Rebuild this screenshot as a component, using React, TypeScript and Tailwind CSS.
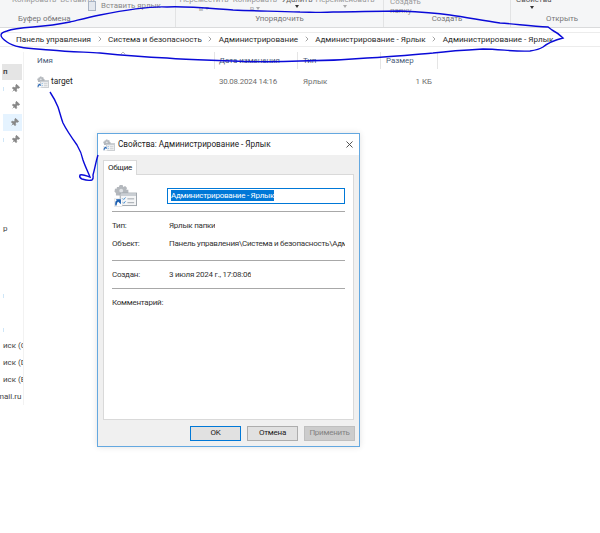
import { Pin, X, ChevronUp, ChevronRight } from "lucide-react";

const font = "font-['Roboto','Liberation_Sans',sans-serif]";

function ShortcutIcon({ size }: { size: number }) {
	return (
		<svg width={size} height={size} viewBox="0 0 24 24" className="shrink-0">
			{/* gear */}
			<path
				d="M6 1h3l.6 2 2-.8 2 2-.8 1.8H15v6H2V9.5L.5 8l.5-3 2-.2L3 3l2 .2z"
				fill="#b4b8bd"
			/>
			<circle cx="7.5" cy="7" r="2" fill="#dfe2e5" />
			{/* window */}
			<rect x="6.5" y="9.5" width="17" height="13" fill="#f4f5f6" stroke="#9ea4aa" />
			<rect x="7" y="10" width="16" height="2.5" fill="#c9ced3" />
			<path d="M9 15l1.2 1.2L12 14M9 19l1.2 1.2L12 18" stroke="#4a90d0" strokeWidth="1" fill="none" />
			<path d="M14 15.5h7M14 19.5h7" stroke="#9ea4aa" />
			{/* shortcut arrow */}
			<rect x="0.5" y="15.5" width="8" height="8" fill="#fff" stroke="#d0d0d0" strokeWidth="0.5" />
			<path d="M2 22.5v-2.5c0-1.5 1-2.5 2.5-2.5M3.5 16.5h3v3z" stroke="#1c5fb0" strokeWidth="1.4" fill="#1c5fb0" />
		</svg>
	);
}

function Caret({ dark }: { dark?: boolean }) {
	return (
		<span
			className={`inline-block w-0 h-0 border-x-[2.5px] border-x-transparent border-t-[3px] ${dark ? "border-t-[#333]" : "border-t-[#aaa]"}`}
		/>
	);
}

function RibbonButton({ label, width, second, dark }: { label: string; width: string; second?: string; dark?: boolean }) {
	return (
		<div className={`${width} flex flex-col items-center leading-[9px] whitespace-nowrap ${dark ? "text-[#666]" : "text-[#999]"}`}>
			<span>{label}</span>
			<span className="flex items-center gap-[2px] h-[9px]">
				{second && <span className="text-[#aaa]">{second}</span>}
				<Caret dark={dark} />
			</span>
		</div>
	);
}

function Ribbon() {
	return (
		<div className="flex h-[28px] bg-[#f5f6f7] border-b border-[#dadbdc] text-[7.9px] text-[#777] overflow-hidden">
			<div className="w-[176px] flex flex-col justify-between border-r border-[#e2e3e4] pb-[1px]">
				<div className="flex h-[12px]">
					<span className="w-[88px] pl-[12px] -mt-[6px] whitespace-nowrap text-[#999]">Копировать&nbsp;&nbsp;Вставить</span>
					<div className="flex items-center gap-[5px]">
						<div className="w-[8px] h-[10px] bg-[#e4e8ee] border border-[#a9b4c4]" />
						<span className="whitespace-nowrap text-[#888]">Вставить ярлык</span>
					</div>
				</div>
				<span className="pl-[18px] leading-[14px]">Буфер обмена</span>
			</div>
			<div className="w-[208px] flex flex-col justify-between border-r border-[#e2e3e4] pb-[1px]">
				<div className="flex h-[13px] -mt-[5px] pl-[3px]">
					<RibbonButton label="Переместить" second="в" width="w-[50px]" />
					<RibbonButton label="Копировать" second="в" width="w-[52px]" />
					<RibbonButton label="Удалить" width="w-[32px]" dark />
					<RibbonButton label="Переименовать" width="w-[64px]" />
				</div>
				<span className="text-center leading-[14px]">Упорядочить</span>
			</div>
			<div className="w-[127px] flex flex-col justify-between border-r border-[#e2e3e4] pb-[1px]">
				<div className="h-[13px] -mt-[3px] pl-[6px] leading-[9px] text-[#999]">
					Создать
					<br />
					папку
				</div>
				<span className="text-center leading-[14px]">Создать</span>
			</div>
			<div className="flex-1 flex flex-col justify-between pb-[1px]">
				<div className="h-[13px] -mt-[5px] pl-[5px] leading-[9px] text-[#555]">
					Свойства
					<div className="pl-[14px] leading-[5px]">
						<Caret dark />
					</div>
				</div>
				<span className="pl-[35px] leading-[14px]">Открыть</span>
			</div>
		</div>
	);
}

function Breadcrumb() {
	const parts = [
		"Панель управления",
		"Система и безопасность",
		"Администрирование",
		"Администрирование - Ярлык",
		"Администрирование - Ярлык",
	];
	return (
		<div className="h-[15px] mt-[4px] pl-[16px] border-y border-[#ececec] flex items-center text-[8.1px] text-[#2a2a2a] whitespace-nowrap">
			{parts.map((p, i) => (
				<span key={i} className="flex items-center">
					{i > 0 && <ChevronRight size={8} className="mx-[4.5px] text-[#777]" />}
					{p}
				</span>
			))}
		</div>
	);
}

function Sidebar() {
	const pinRow = "h-[17px] flex items-center justify-between pl-[3px] pr-[3px]";
	return (
		<div className="w-[24px] shrink-0 border-r border-[#f2f2f2] pt-[12px] text-[8px] text-[#444] overflow-hidden whitespace-nowrap">
			<div className="h-[16px] w-[20px] ml-[2px] bg-[#e5e5e5] flex items-center pl-[1px] font-semibold">п</div>
			<div className={pinRow}>
				<span className="w-[1px] h-[4px] bg-[#cfe6f7]" />
				<Pin size={9} className="text-[#888] rotate-45" fill="#888" />
			</div>
			<div className={pinRow}>
				<span />
				<Pin size={9} className="text-[#888] rotate-45" fill="#888" />
			</div>
			<div className={`${pinRow} bg-[#e5f3ff] ml-[3px] w-[19px]`}>
				<span />
				<Pin size={9} className="text-[#888] rotate-45" fill="#888" />
			</div>
			<div className={pinRow}>
				<span className="w-[1px] h-[4px] bg-[#cfe6f7]" />
				<Pin size={9} className="text-[#888] rotate-45" fill="#888" />
			</div>
			<div className="h-[72px]" />
			<div className="h-[17px] pl-[3px] flex items-center">р</div>
			<div className="h-[54px]" />
			<div className="h-[9px] flex items-center pl-[3px]">
				<span className="w-[1px] h-[4px] bg-[#cfe6f7]" />
			</div>
			<div className="h-[25px]" />
			<div className="h-[9px] flex items-center pl-[3px]">
				<span className="w-[1px] h-[4px] bg-[#cfe6f7]" />
			</div>
			<div className="h-[3px]" />
			{["иск (C", "иск (D", "иск (E"].map((t) => (
				<div key={t} className="h-[17px] flex items-center pl-[3px] overflow-hidden">
					{t}
				</div>
			))}
			<div className="h-[17px] flex items-center -ml-[3px]">mail.ru</div>
		</div>
	);
}

function FileList() {
	const cols = "grid grid-cols-[191px_83px_83px_57px]";
	return (
		<div className="flex-1 text-[7.9px]">
			<div className={`${cols} h-[17px] text-[#4c607a] relative`}>
				<span className="pl-[13px] border-r border-[#e5e5e5] flex items-center">Имя</span>
				<span className="pl-[4px] border-r border-[#e5e5e5] flex items-center">Дата изменения</span>
				<span className="pl-[5px] border-r border-[#e5e5e5] flex items-center">Тип</span>
				<span className="pl-[5px] border-r border-[#e5e5e5] flex items-center">Размер</span>
				<ChevronUp size={8} className="absolute left-[95px] -top-[3px] text-[#999]" />
			</div>
			<div className={`${cols} h-[17px] mt-[4px] items-center text-[#6d6d6d]`}>
				<span className="pl-[13px] flex items-center gap-[2px] text-[#222] text-[8.3px]">
					<ShortcutIcon size={12} />
					target
				</span>
				<span className="pl-[4px] tracking-[-0.2px]">30.08.2024 14:16</span>
				<span className="pl-[5px]">Ярлык</span>
				<span className="text-right pr-[6px]">1 КБ</span>
			</div>
		</div>
	);
}

function Row({ label, children }: { label: string; children: React.ReactNode }) {
	return (
		<div className="flex items-center h-[12px]">
			<span className="w-[57px] shrink-0">{label}</span>
			<span className="overflow-hidden whitespace-nowrap">{children}</span>
		</div>
	);
}

function Dialog() {
	return (
		<div className="absolute left-[97px] top-[133px] w-[263px] h-[314px] border border-[#64a8e0] bg-[#f0f0f0] flex flex-col text-[8px] tracking-[-0.25px] text-[#333] shadow-[0_0_6px_rgba(0,0,0,0.12)]">
			<div className="h-[21px] bg-white flex items-center pl-[5px] pr-[3px] text-[8.2px] tracking-normal text-[#222] shrink-0">
				<ShortcutIcon size={12} />
				<span className="ml-[3px] flex-1">Свойства: Администрирование - Ярлык</span>
				<X size={11} className="text-[#444] mr-[1px]" />
			</div>
			<div className="pl-[5px] pr-[5px] flex flex-col flex-1">
				<div className="mt-[5px] w-[34px] h-[15px] bg-white border border-b-0 border-[#d9d9d9] flex items-center justify-center z-10 -mb-[1px] text-[#222]">
					Общие
				</div>
				<div className="flex-1 bg-white border border-[#d9d9d9] px-[8px] flex flex-col">
					<div className="flex items-center h-[36px] pt-[5px] shrink-0 pl-[2px]">
						<ShortcutIcon size={23} />
						<div className="ml-[30px] w-[178px] h-[16px] border border-[#0078d7] flex items-center pl-[3px]">
							<span className="bg-[#0078d7] text-white leading-[11px] whitespace-nowrap">Администрирование - Ярлык</span>
						</div>
					</div>
					<div className="h-[1px] bg-[#a8a8a8] shrink-0" />
					<div className="flex flex-col gap-[6px] pt-[8px] pb-[10px]">
						<Row label="Тип:">Ярлык папки</Row>
						<Row label="Объект:">Панель управления\Система и безопасность\Адм</Row>
					</div>
					<div className="h-[1px] bg-[#a8a8a8] shrink-0" />
					<div className="pt-[8px] pb-[7px]">
						<Row label="Создан:">3 июля 2024 г., 17:08:06</Row>
					</div>
					<div className="h-[1px] bg-[#a8a8a8] shrink-0" />
					<div className="pt-[8px]">
						<Row label="Комментарий:">{""}</Row>
					</div>
				</div>
				<div className="h-[26px] flex items-center justify-end gap-[6px] shrink-0 -mr-[1px]">
					<button className="w-[51px] h-[15px] bg-[#e1e1e1] border border-[#0078d7] text-[#222]">OK</button>
					<button className="w-[51px] h-[15px] bg-[#e1e1e1] border border-[#adadad] text-[#222]">Отмена</button>
					<button className="w-[51px] h-[15px] bg-[#cccccc] border border-[#bfbfbf] text-[#838383]">Применить</button>
				</div>
			</div>
		</div>
	);
}

export default function App() {
	return (
		<div className={`relative w-[600px] h-[533px] bg-white overflow-hidden ${font}`}>
			<Ribbon />
			<Breadcrumb />
			<div className="flex mt-[5px]">
				<Sidebar />
				<FileList />
			</div>
			<Dialog />
			{/* hand-drawn markup */}
			<svg className="absolute inset-0 pointer-events-none" width="600" height="533" viewBox="0 0 600 533" fill="none">
				<path
					d="M300 12C270 11 255 11 233 10C205 8 185 6 167 7C150 6 125 10 100 15C85 18 75 21 70 22C55 25 45 26 33 27C20 28 12 29 7 31C3 32 1 33 1 35C1 38 4 40 7 42C11 45 15 46 20 47C30 49 40 49 50 50C70 52 85 52 100 53C120 55 145 57 167 58C190 60 210 60 233 61C255 62 280 62 300 61C320 61 345 60 367 58C390 57 410 55 433 53C450 51 465 50 483 49C500 49 515 52 530 51C537 50 540 49 543 47C548 43 555 40 563 38C560 35 556 32 552 30L548 27C530 26 515 24 500 23C480 20 465 17 450 15C435 13 420 12 400 11C375 11 355 12 333 12C320 13 310 12 300 12Z"
					stroke="#0a0ad8"
					strokeWidth="1.4"
				/>
				<path
					d="M50 92C54 98 56 102 58 107C60 113 61 118 63 123C67 131 72 138 77 145C80 150 82 155 83 160C85 166 88 172 90 177C87 176 83 174 80 175C79 177 80 178 82 179C85 180 89 181 92 180C94 178 93 177 93 175C95 168 96 161 98 155"
					stroke="#0a0ad8"
					strokeWidth="1.4"
				/>
			</svg>
		</div>
	);
}
